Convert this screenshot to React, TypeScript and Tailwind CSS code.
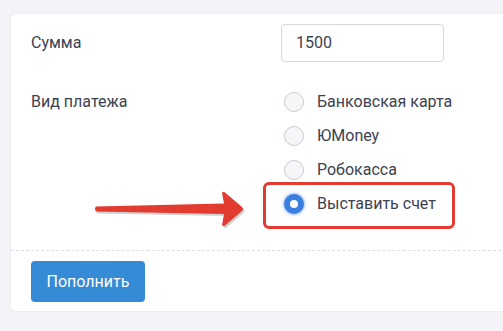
import React from "react";

const Radio = ({ checked }: { checked?: boolean }) =>
  checked ? (
    <span className="ml-[3px] box-border block h-[20px] w-[20px] shrink-0 rounded-full border-[6px] border-[#3a7fe0] bg-white shadow-[0_0_3px_1px_rgba(58,127,224,0.45)]" />
  ) : (
    <span className="ml-[3px] box-border block h-[20px] w-[20px] shrink-0 rounded-full border border-[#c9ccd3] bg-[#f6f6f9]" />
  );

const options = [
  { label: "Банковская карта" },
  { label: "ЮMoney" },
  { label: "Робокасса" },
];

export default function App() {
  return (
    <div
      className="relative h-[331px] w-[503px] overflow-hidden bg-[#f3f3f8] pl-[11px] pt-[14px] text-[16px] text-[#3b4250]"
      style={{ fontFamily: "Roboto, 'Noto Sans', sans-serif" }}
    >
      <div className="w-[520px] rounded-[5px] bg-white shadow-[0_0_2px_rgba(40,40,80,0.12)]">
        <div className="px-5 pt-[10px] pb-[29px]">
          <div className="flex items-center">
            <div className="w-[250px]">Сумма</div>
            <div className="box-border flex h-[38px] w-[163px] items-center rounded-[4px] border border-[#d6d8de] px-[14px]">
              1500
            </div>
          </div>
          <div className="mt-[23px] flex">
            <div className="flex h-[34px] w-[250px] items-center">Вид платежа</div>
            <div className="flex flex-col">
              {options.map((o) => (
                <div key={o.label} className="flex h-[34px] items-center gap-[13px]">
                  <Radio />
                  <span>{o.label}</span>
                </div>
              ))}
              <div className="relative flex h-[34px] items-center gap-[13px]">
                <Radio checked />
                <span>Выставить счет</span>
                <div className="absolute left-[-18px] top-[-5px] h-[47px] w-[192px] rounded-[6px] border-[3px] border-[#e23b30]" />
              </div>
            </div>
          </div>
        </div>
        <div className="border-t border-dashed border-[#dcdcf0] pl-5 pt-[10px] pb-[9px]">
          <button className="h-[41px] w-[114px] rounded-[4px] bg-[#358bd5] text-[16px] text-white">
            Пополнить
          </button>
        </div>
      </div>
      <svg
        className="absolute left-0 top-0"
        width="503"
        height="331"
        viewBox="0 0 503 331"
      >
        <g transform="translate(1.5,2)" fill="#9a9a9a" opacity="0.45">
          <path d="M96 206.5 L224 203.5 L222 193 Q223 191 225 192.5 L242 207 Q244 209 242 211 L225 225.5 Q223 227 222 225 L224 214 L96 211.5 Q94 209 96 206.5 Z" />
        </g>
        <path
          fill="#e23b30"
          d="M96 206.5 L224 203.5 L222 193 Q223 191 225 192.5 L242 207 Q244 209 242 211 L225 225.5 Q223 227 222 225 L224 214 L96 211.5 Q94 209 96 206.5 Z"
        />
      </svg>
    </div>
  );
}
